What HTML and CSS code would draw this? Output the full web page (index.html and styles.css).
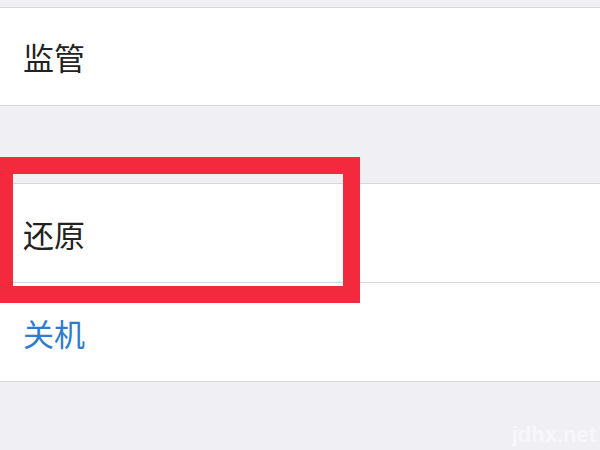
FILE: index.html
```html
<!DOCTYPE html>
<html lang="zh-CN">
<head>
  <meta charset="UTF-8" />
  <meta name="viewport" content="width=device-width, initial-scale=1" />
  <title>设置</title>
  <link rel="stylesheet" href="styles.css">
</head>
<body>

<div class="screen">
  <div class="group first">
    <div class="cell">监管</div>
  </div>

  <div class="group second">
    <div class="cell">还原</div>
    <div class="cell link">关机</div>
  </div>

  <!-- annotation over the "还原" row -->
  <div class="highlight"></div>

  <div class="watermark">jdhx.net</div>
</div>

</body>
</html>
```

FILE: styles.css
```css
body {
  margin: 0;
  background: #efeff4;
  font-family: "Noto Sans CJK SC", "Noto Sans", sans-serif;
}

.screen {
  position: relative;
  width: 600px;
  height: 450px;
  overflow: hidden;
  padding-top: 7px;
  box-sizing: border-box;
}

.group {
  background: #ffffff;
  border-top: 1px solid #d6d6db;
  border-bottom: 1px solid #d6d6db;
}

.second {
  margin-top: 77px;
}

.cell {
  height: 97px;
  display: flex;
  align-items: center;
  padding-left: 23px;
  font-size: 31px;
  color: #222222;
}

.second .cell {
  height: 98px;
}

.second .cell + .cell {
  border-top: 1px solid #d6d6db;
}

.link {
  color: #2f7bd0;
}

.highlight {
  position: absolute;
  left: 0;
  top: 157px;
  width: 330px;
  height: 112px;
  border: 17px solid #f32a3e;
  border-left-width: 13px;
}

.watermark {
  position: absolute;
  right: 4px;
  bottom: 2px;
  font-family: "Liberation Sans", sans-serif;
  font-size: 22px;
  font-weight: bold;
  color: rgba(255, 255, 255, 0.55);
}
```
